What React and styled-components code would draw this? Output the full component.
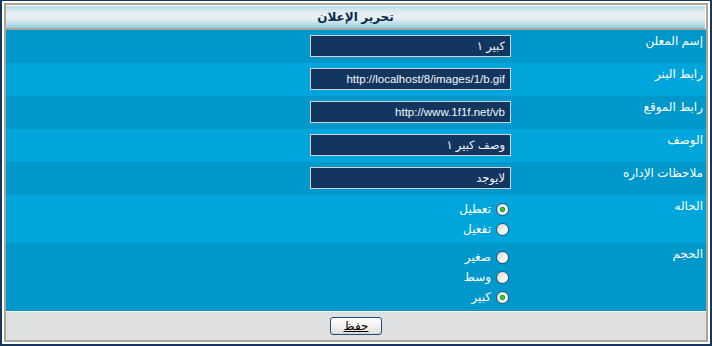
import React from 'react';
import styled, { createGlobalStyle } from 'styled-components';

const GlobalStyle = createGlobalStyle`
  html, body { margin: 0; padding: 0; background: #ffffff; }
  body { font-family: "Liberation Sans", "DejaVu Sans", sans-serif; }
`;

const Frame = styled.div`
  box-sizing: border-box;
  width: 712px;
  height: 346px;
  border: 2px solid #16375c;
  border-top-width: 1px;
  padding: 2px;
  background: #ffffff;
  direction: rtl;
`;

const Panel = styled.form`
  box-sizing: border-box;
  height: 100%;
  margin: 0;
  border: 2px solid #a9a698;
  display: flex;
  flex-direction: column;
`;

const Header = styled.div`
  box-sizing: border-box;
  height: 25px;
  border-top: 1px solid #ffffff;
  border-right: 1px solid #ffffff;
  border-bottom: 2px solid #a9a698;
  background: linear-gradient(
    #b4dbe8 0%,
    #d6e9ef 20%,
    #eaeff0 40%,
    #e4edf0 60%,
    #bcdde9 80%,
    #97cadf 100%
  );
  display: flex;
  align-items: center;
  justify-content: center;
  font-size: 12px;
  font-weight: bold;
  color: #0c2a4b;
`;

const Row = styled.div`
  display: grid;
  grid-template-columns: 192px 1fr;
  background: ${(p) => (p.$light ? '#00a6db' : '#0098ca')};
`;

const Label = styled.div`
  padding: 4px 3px 0 0;
  color: #ffffff;
  font-size: 12px;
  line-height: 15px;
  text-align: right;
`;

const Value = styled.div`
  display: flex;
  flex-direction: column;
  align-items: flex-start;
  padding: ${(p) => (p.$radios ? '4px 3px' : '5px 3px 6px')};
`;

const TextField = styled.input`
  box-sizing: border-box;
  width: 201px;
  height: 22px;
  margin: 0;
  padding: 0 5px;
  border: 1px solid #cfd3d7;
  background: #12365f;
  color: #f2f6fa;
  font-family: inherit;
  font-size: 11.5px;
  text-align: right;
  direction: rtl;
  outline: none;
`;

const Option = styled.label`
  display: flex;
  align-items: center;
  height: 20px;
  gap: 5px;
  color: #ffffff;
  font-size: 12px;
`;

const Radio = styled.input`
  appearance: none;
  -webkit-appearance: none;
  box-sizing: border-box;
  width: 13px;
  height: 13px;
  margin: 0 2px 0 0;
  border: 1px solid #1c5180;
  border-radius: 50%;
  background: ${(p) =>
    p.checked
      ? 'radial-gradient(circle at 50% 50%, #5fd35f 0, #21a121 2.2px, transparent 3px), linear-gradient(135deg, #d6d5cc 0%, #f4f4f0 60%, #ffffff 100%)'
      : 'linear-gradient(135deg, #d6d5cc 0%, #f4f4f0 60%, #ffffff 100%)'};
`;

const Footer = styled.div`
  flex: 1;
  border-top: 1px solid #ffffff;
  background: #dfe0e2;
  display: flex;
  align-items: center;
  justify-content: center;
`;

const Button = styled.button`
  box-sizing: border-box;
  width: 52px;
  height: 18px;
  padding: 0;
  border: 1px solid #1d4f7f;
  border-radius: 3px;
  background: linear-gradient(#ffffff 0%, #f3f2ee 50%, #e4e2da 90%, #d3d0c6 100%);
  color: #000000;
  font-family: inherit;
  font-size: 12px;
  text-decoration: underline;
`;

const fields = [
  { label: 'إسم المعلن', value: 'كبير ١' },
  { label: 'رابط البنر', value: 'http://localhost/8/images/1/b.gif' },
  { label: 'رابط الموقع', value: 'http://www.1f1f.net/vb' },
  { label: 'الوصف', value: 'وصف كبير ١' },
  { label: 'ملاحظات الإداره', value: 'لايوجد' },
];

const groups = [
  { label: 'الحاله', name: 'status', options: ['تعطيل', 'تفعيل'], selected: 0 },
  { label: 'الحجم', name: 'size', options: ['صغير', 'وسط', 'كبير'], selected: 2 },
];

export default function App() {
  return (
    <>
      <GlobalStyle />
      <Frame>
        <Panel onSubmit={(e) => e.preventDefault()}>
          <Header>تحرير الإعلان</Header>
          {fields.map((f, i) => (
            <Row key={f.label} $light={i % 2 === 1}>
              <Label>{f.label}</Label>
              <Value>
                <TextField defaultValue={f.value} />
              </Value>
            </Row>
          ))}
          {groups.map((g, gi) => (
            <Row key={g.name} $light={(fields.length + gi) % 2 === 1}>
              <Label>{g.label}</Label>
              <Value $radios>
                {g.options.map((o, oi) => (
                  <Option key={o}>
                    <Radio
                      type="radio"
                      name={g.name}
                      checked={oi === g.selected}
                      readOnly
                    />
                    {o}
                  </Option>
                ))}
              </Value>
            </Row>
          ))}
          <Footer>
            <Button type="submit">حفظ</Button>
          </Footer>
        </Panel>
      </Frame>
    </>
  );
}
